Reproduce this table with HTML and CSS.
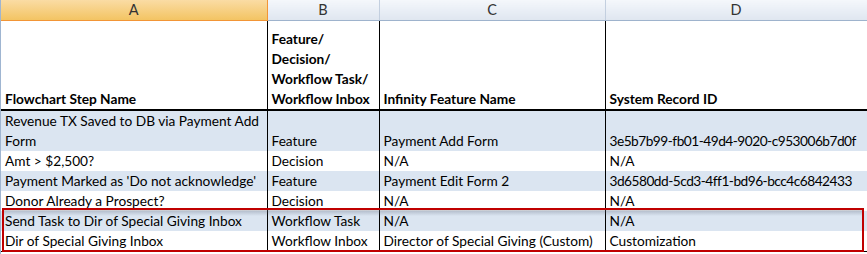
FILE: index.html
```html
<!DOCTYPE html>
<html lang="en">

<head>
    <meta charset="UTF-8">
    <meta name="viewport" content="width=device-width, initial-scale=1.0">
    <title>Flowchart Steps</title>
    <link rel="stylesheet" href="styles.css">
</head>

<body>
    <div class="sheet">
        <table class="grid">
            <colgroup>
                <col class="col-a">
                <col class="col-b">
                <col class="col-c">
                <col class="col-d">
            </colgroup>
            <tr class="letters">
                <th class="selected">A</th>
                <th>B</th>
                <th>C</th>
                <th>D</th>
            </tr>
            <tr class="titles">
                <td>Flowchart Step Name</td>
                <td>Feature/<br>Decision/<br>Workflow Task/<br>Workflow Inbox</td>
                <td>Infinity Feature Name</td>
                <td>System Record ID</td>
            </tr>
            <tr class="band">
                <td>Revenue TX Saved to DB via Payment Add<br>Form</td>
                <td>Feature</td>
                <td>Payment Add Form</td>
                <td class="id">3e5b7b99-fb01-49d4-9020-c953006b7d0f</td>
            </tr>
            <tr>
                <td>Amt &gt; $2,500?</td>
                <td>Decision</td>
                <td>N/A</td>
                <td>N/A</td>
            </tr>
            <tr class="band">
                <td>Payment Marked as 'Do not acknowledge'</td>
                <td>Feature</td>
                <td>Payment Edit Form 2</td>
                <td class="id">3d6580dd-5cd3-4ff1-bd96-bcc4c6842433</td>
            </tr>
            <tr>
                <td>Donor Already a Prospect?</td>
                <td>Decision</td>
                <td>N/A</td>
                <td>N/A</td>
            </tr>
            <tr class="band">
                <td>Send Task to Dir of Special Giving Inbox</td>
                <td>Workflow Task</td>
                <td>N/A</td>
                <td>N/A</td>
            </tr>
            <tr class="last">
                <td>Dir of Special Giving Inbox</td>
                <td>Workflow Inbox</td>
                <td>Director of Special Giving (Custom)</td>
                <td>Customization</td>
            </tr>
        </table>

        <!-- red box round the workflow rows -->
        <div class="callout"></div>
    </div>
</body>

</html>
```

FILE: styles.css
```css
body {
    margin: 0;
    background-color: #fff;
    overflow: hidden;
}

.sheet {
    position: relative;
    width: 867px;
    height: 254px;
    overflow: hidden;
    border-left: 1px solid #9fb5d1;
    box-sizing: border-box;
}

.grid {
    border-collapse: collapse;
    table-layout: fixed;
    width: 866px;
    font: 13.7px Lato, sans-serif;
    color: #000;
}

.col-a { width: 266px; }
.col-b { width: 112px; }
.col-c { width: 226px; }
.col-d { width: 262px; }

/* column letters */
.letters th {
    height: 20px;
    padding: 0;
    font-size: 14.5px;
    font-weight: normal;
    color: #333;
    text-align: center;
    background: linear-gradient(#f4f7fb, #dfe6f0);
    border-right: 1px solid #c3cfdf;
    border-bottom: 1px solid #9eb3cd;
    box-sizing: border-box;
}

.letters th.selected {
    background: linear-gradient(#fadca4, #f3c463);
    border-right: 1px solid #f29536;
    border-bottom: 1px solid #f29536;
}

td {
    padding: 0 3px 0 4px;
    line-height: 20px;
    vertical-align: bottom;
    white-space: nowrap;
    overflow: hidden;
    border-left: 1px solid #000;
}

td:first-child {
    border-left: none;
}

/* guids run wide in this font, pull them in a bit */
td.id {
    letter-spacing: -0.5px;
}

.titles td {
    height: 88px;
    font-weight: bold;
    border-bottom: 2px solid #000;
}

.band td {
    background-color: #dbe5f1;
}

.last td {
    border-bottom: 1px solid #000;
}

.callout {
    position: absolute;
    left: 1px;
    top: 208px;
    width: 862px;
    height: 44px;
    border: 2px solid #c00000;
    box-sizing: border-box;
    background: linear-gradient(rgba(90, 100, 120, 0.35), rgba(90, 100, 120, 0) 6px);
}
```
